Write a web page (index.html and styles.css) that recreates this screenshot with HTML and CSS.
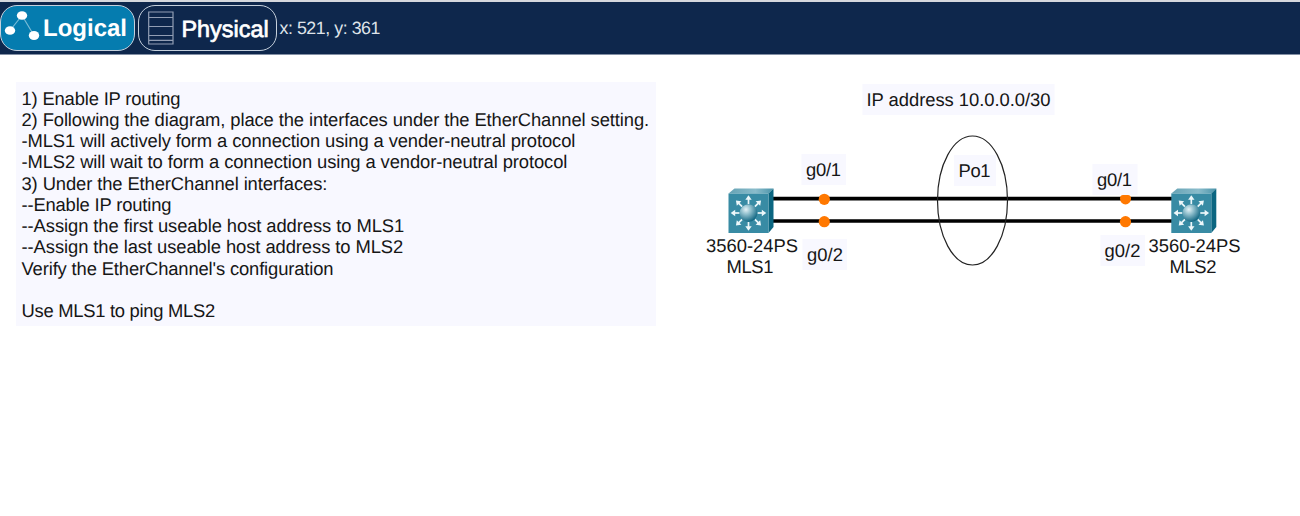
FILE: index.html
```html
<!DOCTYPE html>
<html lang="en">
<head>
<meta charset="utf-8">
<title>Logical Workspace</title>
<link rel="stylesheet" href="styles.css">
</head>
<body>
<header class="toolbar">
  <div class="tab tab-logical">
    <svg class="icon-logical" width="36" height="32" viewBox="0 0 36 32">
      <path d="M6 20.500 18 5.500 30 25.500" fill="none" stroke="#79bbd6" stroke-width="1.200"/>
      <ellipse cx="18" cy="5.500" rx="5.200" ry="4.300" fill="#fff"/>
      <ellipse cx="6" cy="20.500" rx="5.200" ry="4.300" fill="#fff"/>
      <ellipse cx="30" cy="25.500" rx="5.200" ry="4.500" fill="#fff"/>
    </svg>
    <span>Logical</span>
  </div>
  <div class="tab tab-physical">
    <svg class="icon-physical" width="26" height="34" viewBox="0 0 26 34">
      <path d="M.7 1h24.300v32H.7zM.7 6.500H25M.7 15.500H25M.7 24.500H25M.7 29.300H25" fill="none" stroke="#929eb4" stroke-width="1.200"/>
    </svg>
    <span>Physical</span>
  </div>
  <div class="coords">x: 521, y: 361</div>
</header>
<main class="workspace">
  <section class="notes">
    <p class="n1">1) Enable IP routing</p>
    <p class="n2">2) Following the diagram, place the interfaces under the EtherChannel setting.</p>
    <p class="n3">-MLS1 will actively form a connection using a vender-neutral protocol</p>
    <p class="n4">-MLS2 will wait to form a connection using a vendor-neutral protocol</p>
    <p class="n5">3) Under the EtherChannel interfaces:</p>
    <p class="n6">--Enable IP routing</p>
    <p class="n7">--Assign the first useable host address to MLS1</p>
    <p class="n8">--Assign the last useable host address to MLS2</p>
    <p class="n9">Verify the EtherChannel's configuration</p>
    <p class="n10">&nbsp;</p>
    <p class="n11">Use MLS1 to ping MLS2</p>
  </section>
  <svg class="diagram" width="600" height="220" viewBox="680 80 600 220">
    <defs>
      <radialGradient id="ball" cx=".36" cy=".3" r=".72">
        <stop offset="0" stop-color="#e4f2f6"/>
        <stop offset=".4" stop-color="#8dbdcb"/>
        <stop offset="1" stop-color="#126783"/>
      </radialGradient>
      <linearGradient id="top" x2="1">
        <stop offset="0" stop-color="#65a2b4"/>
        <stop offset=".6" stop-color="#8abccb"/>
        <stop offset="1" stop-color="#4a94aa"/>
      </linearGradient>
      <g id="arrow">
        <path d="M0-9V-14" stroke="#edf7fa" stroke-width="1.700"/>
        <path d="M-3.200-13.300 0-17.800 3.200-13.300z" fill="#edf7fa"/>
      </g>
      <g id="switch">
        <path d="M0 5 6 0h39l-5 5z" fill="url(#top)"/>
        <path d="M40 5 45 0v38.500L40 44.500z" fill="#0b6681"/>
        <path d="M0 5h40v39.500H0z" fill="#388ba4"/>
        <g transform="translate(20 24.500)">
          <use href="#arrow"/><use href="#arrow" transform="rotate(45)"/>
          <use href="#arrow" transform="rotate(90)"/><use href="#arrow" transform="rotate(135)"/>
          <use href="#arrow" transform="rotate(180)"/><use href="#arrow" transform="rotate(225)"/>
          <use href="#arrow" transform="rotate(270)"/><use href="#arrow" transform="rotate(315)"/>
          <circle r="8.800" fill="url(#ball)"/>
        </g>
      </g>
    </defs>
    <g class="label-box">
      <rect x="862.500" y="84" width="192" height="31"/>
      <rect x="801.500" y="154" width="44.500" height="31"/>
      <rect x="802.500" y="239" width="44.500" height="31"/>
      <rect x="1092.500" y="164" width="45" height="31"/>
      <rect x="1100.500" y="235" width="44.500" height="31"/>
      <rect x="954" y="155" width="42" height="31"/>
    </g>
    <path d="M772 198.700H1173M772 221H1173" stroke="#000" stroke-width="3.700"/>
    <ellipse cx="972.500" cy="200.500" rx="35" ry="64.500" fill="none" stroke="#222" stroke-width="1.200"/>
    <g fill="#ff7800">
      <circle cx="824.300" cy="199.300" r="5.600"/>
      <circle cx="824.300" cy="221.700" r="5.600"/>
      <path d="M1120 198.500q0-3.500 3-3.500h5q3 0 3 3.500a5.500 5.900 0 0 1-11 0z"/>
      <circle cx="1125.500" cy="221.700" r="5.600"/>
    </g>
    <use href="#switch" x="728.500" y="188.500"/>
    <use href="#switch" x="1171.300" y="188.500"/>
    <g class="labels">
      <text x="866.500" y="105.900" textLength="184">IP address 10.0.0.0/30</text>
      <text x="806" y="176" textLength="35">g0/1</text>
      <text x="807" y="260.800" textLength="36">g0/2</text>
      <text x="1097" y="186" textLength="35">g0/1</text>
      <text x="1104.500" y="257" textLength="36">g0/2</text>
      <text x="958.500" y="176.700" textLength="32">Po1</text>
      <text x="706" y="252" textLength="92">3560-24PS</text>
      <text x="726.500" y="273" textLength="47">MLS1</text>
      <text x="1148.500" y="252" textLength="92">3560-24PS</text>
      <text x="1169.500" y="273" textLength="47">MLS2</text>
    </g>
  </svg>
</main>
</body>
</html>
```
FILE: styles.css
```css
* { box-sizing: border-box; }

body {
  margin: 0;
  height: 516px;
  overflow: hidden;
  background: #fff;
  color: #161616;
  font-family: "Liberation Sans", Arial, sans-serif;
  text-rendering: geometricPrecision;
}

.toolbar {
  display: flex;
  height: 55px;
  padding-top: 3px;
  background: #0e274c;
  border-top: 2px solid #d5d8dd;
  border-bottom: 1px solid #8390a5;
  color: #fff;
}

.tab {
  display: flex;
  height: 46px;
  border: 1.5px solid #c5d0dc;
  border-radius: 17px;
  font-size: 24px;
  line-height: 46px;
  white-space: nowrap;
}

.tab svg { flex: none; }

.tab-logical {
  width: 135px;
  padding-left: 3px;
  background: #057caf;
  font-weight: bold;
}

.tab-physical {
  width: 138.500px;
  margin-left: 3px;
  padding-left: 8.500px;
  font-size: 23.400px;
  -webkit-text-stroke: .7px #fff;
}

.icon-logical { margin-top: 4px; margin-right: 3px; }
.icon-physical { margin-top: 5px; margin-right: 8px; }

.coords {
  margin-left: 3px;
  font-size: 17.800px;
  letter-spacing: -.45px;
  line-height: 46px;
  color: #dfe3e9;
}

.workspace {
  display: flex;
  align-items: flex-start;
}

.notes {
  flex: none;
  width: 639.500px;
  height: 244px;
  margin: 27px 0 0 16px;
  padding: 5.500px 0 0 5.500px;
  background: #f8f8ff;
  font-size: 18.400px;
  letter-spacing: -.107px;
  line-height: 21.250px;
  white-space: nowrap;
}

.notes p { margin: 0; }
.notes .n1, .notes .n6 { letter-spacing: -.17px; }
.notes .n7, .notes .n8 { letter-spacing: -.08px; }
.notes .n9 { letter-spacing: -.14px; }
.notes .n11 { letter-spacing: -.28px; }

.diagram { flex: none; margin: 25px 0 0 24.500px; }

.label-box { fill: #f8f8ff; }

.labels {
  fill: #161616;
  font-size: 18.400px;
}
```
